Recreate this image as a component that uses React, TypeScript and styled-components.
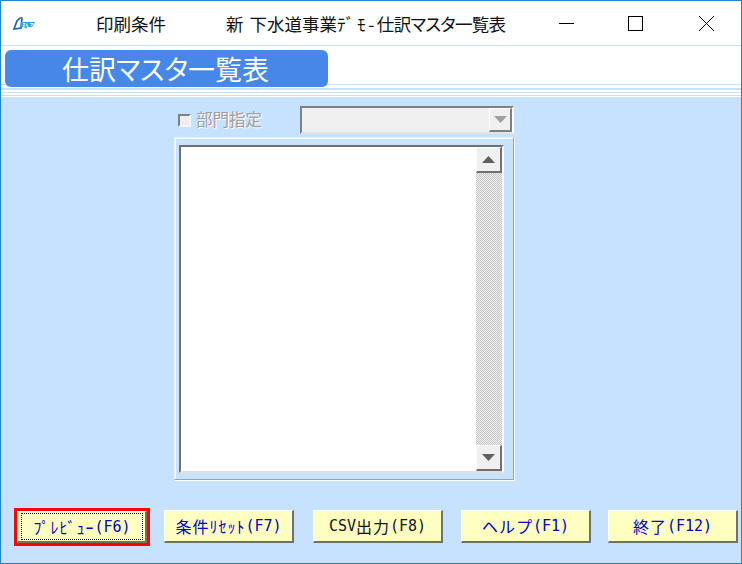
import styled, { createGlobalStyle } from 'styled-components'

const FONT = `"Noto Sans CJK JP", "Noto Sans CJK SC", "Liberation Sans", sans-serif`

const BUTTONS = [
  { prefix: '', label: 'ﾌﾟﾚﾋﾞｭｰ', fnKey: '(F6)', gapAfter: 14, isFocused: true },
  { prefix: '', label: '条件ﾘｾｯﾄ', fnKey: '(F7)', gapAfter: 19 },
  { prefix: 'CSV', label: '出力', fnKey: '(F8)', gapAfter: 18, isDark: true },
  { prefix: '', label: 'ヘルプ', fnKey: '(F1)', gapAfter: 17 },
  { prefix: '', label: '終了', fnKey: '(F12)', gapAfter: 0 },
]

export default function App() {
  return (
    <>
      <GlobalStyle />
      <Window>
        <TitleBar>
          <Logo viewBox="0 0 22 13" aria-hidden="true">
            <path d="M1 12 L4 4 L7 1 H9 L8 11 Z" fill="none" stroke="#1f5fb0" strokeWidth="1.7" />
            <path d="M7 1 H10" stroke="#d98a20" strokeWidth="1.2" />
            <path d="M8 5 H22 L19 10 H14 L13 12 L11 10 H7 Z" fill="#3aa0d8" />
            <path d="M10 6.5 H12 L10 9 H12.5 M14 6.5 L13.5 9 H15.5 M17 6.5 H20 L18 9" fill="none" stroke="#fff" strokeWidth="0.9" />
          </Logo>
          <Caption>印刷条件</Caption>
          <DocTitle>
            新<TitleSpace />下水道事業<HalfText>ﾃﾞﾓ-</HalfText><TitleTail>仕訳マスタ一覧表</TitleTail>
          </DocTitle>
          <WindowControls>
            <ControlIcon viewBox="0 0 15 15" aria-hidden="true">
              <path d="M0 7.5 H15" stroke="#000" />
            </ControlIcon>
            <ControlIcon viewBox="0 0 15 15" aria-hidden="true">
              <rect x="0.5" y="0.5" width="14" height="14" fill="none" stroke="#000" />
            </ControlIcon>
            <CloseIcon viewBox="0 0 15 15" aria-hidden="true">
              <path d="M0 0 L15 15 M15 0 L0 15" stroke="#000" />
            </CloseIcon>
          </WindowControls>
        </TitleBar>

        <Header>
          <HeaderTab>仕訳マスタ一覧表</HeaderTab>
          <Stripes>
            <Stripe $height={1} $gap={3} />
            <Stripe $height={2} $gap={2} />
            <Stripe $height={1} $gap={2} />
            <Stripe $height={1} $gap={1} />
          </Stripes>
        </Header>

        <Body>
          <Form>
            <DeptRow>
              <DeptLabel>
                <Check />
                <DeptText>部門指定</DeptText>
              </DeptLabel>
              <Combo>
                <ComboArrow>
                  <Tri viewBox="0 0 13 7" aria-hidden="true"><path d="M0 0 H13 L6.5 7 Z" fill="#a0a0a0" /></Tri>
                </ComboArrow>
              </Combo>
            </DeptRow>
            <ListFrame>
              <ListBox>
                <ScrollBar>
                  <ScrollButton>
                    <Tri viewBox="0 0 13 7" aria-hidden="true"><path d="M6.5 0 L13 7 H0 Z" fill="#606060" /></Tri>
                  </ScrollButton>
                  <ScrollTrack />
                  <ScrollButton>
                    <Tri viewBox="0 0 13 7" aria-hidden="true"><path d="M0 0 H13 L6.5 7 Z" fill="#606060" /></Tri>
                  </ScrollButton>
                </ScrollBar>
              </ListBox>
            </ListFrame>
          </Form>

          <ButtonRow>
            {BUTTONS.map(button => (
              <ButtonSlot $gapAfter={button.gapAfter} $isFocused={button.isFocused} key={button.fnKey}>
                <FnButton $isDark={button.isDark} type="button">
                  <FnLabel $isFocused={button.isFocused}>
                    {button.prefix}
                    <WideText>{button.label}</WideText>
                    {button.fnKey}
                  </FnLabel>
                </FnButton>
              </ButtonSlot>
            ))}
          </ButtonRow>
        </Body>
      </Window>
    </>
  )
}

const GlobalStyle = createGlobalStyle`
  html, body {
    margin: 0;
    padding: 0;
    background: #fff;
  }
`

const Window = styled.div`
  background: #fff;
  border: 1px solid #1c86d6;
  box-sizing: border-box;
  display: flex;
  flex-direction: column;
  font-family: ${FONT};
  height: 564px;
  width: 742px;
`

const TitleBar = styled.div`
  align-items: center;
  border-bottom: 1px solid #c6e2ff;
  box-sizing: border-box;
  color: #111;
  display: flex;
  flex-shrink: 0;
  font-size: 17.5px;
  height: 45px;
  padding-left: 12px;
`

const Logo = styled.svg`
  height: 13px;
  margin-right: 61px;
  width: 22px;
`

const Caption = styled.span`
  width: 130px;
`

const DocTitle = styled.span`
  font-feature-settings: "palt";
  flex-grow: 1;
`

const TitleSpace = styled.span`
  display: inline-block;
  width: 6px;
`

const HalfText = styled.span`
  letter-spacing: 2.5px;
`

const TitleTail = styled.span`
  letter-spacing: -0.7px;
`

const WindowControls = styled.div`
  display: flex;
  gap: 54px;
  margin-right: 27px;
`

const ControlIcon = styled.svg`
  display: block;
  height: 15px;
  shape-rendering: crispEdges;
  width: 15px;
`

const CloseIcon = styled(ControlIcon)`
  margin-left: 2px;
  shape-rendering: auto;
`

const Header = styled.div`
  display: flex;
  flex-direction: column;
  flex-shrink: 0;
  height: 51px;
  position: relative;
`

const Stripes = styled.div`
  bottom: 0;
  display: flex;
  flex-direction: column;
  left: 0;
  position: absolute;
  right: 0;
`

const Stripe = styled.div<{ $height: number; $gap: number }>`
  background: #c6e2ff;
  height: ${p => p.$height}px;
  margin-bottom: ${p => p.$gap}px;
`

const HeaderTab = styled.div`
  background: #4688e8;
  border-radius: 6px;
  box-sizing: border-box;
  color: #fff;
  font-feature-settings: "palt";
  font-size: 27px;
  height: 37px;
  line-height: 37px;
  margin: 4px 0 0 4px;
  padding-left: 57px;
  position: relative;
  width: 323px;
  z-index: 1;
`

const Body = styled.div`
  background: #c6e2ff;
  display: flex;
  flex-direction: column;
  flex-grow: 1;
  justify-content: space-between;
  padding: 9px 3px 20px 13px;
`

const Form = styled.div`
  display: flex;
  flex-direction: column;
  margin-left: 160px;
  width: 340px;
`

const DeptRow = styled.div`
  align-items: center;
  display: flex;
  height: 28px;
  margin-bottom: 3px;
`

const DeptLabel = styled.label`
  align-items: center;
  color: #a0a0a0;
  display: flex;
  font-size: 16.5px;
  gap: 5px;
  margin-left: 4px;
  text-shadow: 1px 1px 0 #fff;
  width: 122px;
`

const DeptText = styled.span`
  padding-bottom: 2px;
`

const Check = styled.span`
  background: #eee;
  border: 2px solid;
  border-color: #808080 #f4f4f4 #f4f4f4 #808080;
  box-sizing: border-box;
  height: 13px;
  width: 13px;
`

const Combo = styled.div`
  background: #f0f0f0;
  border: 2px solid;
  border-color: #808080 #fff #e4e4e4 #808080;
  box-sizing: border-box;
  display: flex;
  height: 28px;
  justify-content: flex-end;
  width: 214px;
`

const ComboArrow = styled.div`
  align-items: center;
  background: #f0f0f0;
  border: solid;
  border-color: #fff #808080 #808080 #fff;
  border-width: 1px 2px 2px 1px;
  box-sizing: border-box;
  display: flex;
  justify-content: center;
  width: 23px;
`

const Tri = styled.svg`
  display: block;
  height: 7px;
  width: 13px;
`

const ListFrame = styled.div`
  background: #c6e2ff;
  border: 1px solid;
  border-color: #e8f0f8 #a0a0a0 #a0a0a0 #e8f0f8;
  box-shadow: inset 1px 1px 0 #fff, 1px 1px 0 #fff;
  box-sizing: border-box;
  height: 343px;
  padding: 7px 9px 6px 4px;
  width: 340px;
`

const ListBox = styled.div`
  background: #fff;
  border: 2px solid;
  border-color: #707070 #fff #e0e0e0 #707070;
  box-sizing: border-box;
  display: flex;
  height: 100%;
  justify-content: flex-end;
`

const ScrollBar = styled.div`
  display: flex;
  flex-direction: column;
  width: 26px;
`

const ScrollButton = styled.div`
  align-items: center;
  background: #f0f0f0;
  border: solid;
  border-color: #fff #707070 #707070 #fff;
  border-width: 1px 2px 2px 1px;
  box-sizing: border-box;
  display: flex;
  flex-shrink: 0;
  height: 26px;
  justify-content: center;
`

const ScrollTrack = styled.div`
  background: repeating-conic-gradient(#c4c4c4 0 25%, #f0f0f0 0 50%) 0 0 / 2px 2px;
  flex-grow: 1;
`

const ButtonRow = styled.div`
  display: flex;
  height: 33px;
`

const ButtonSlot = styled.div<{ $gapAfter: number; $isFocused?: boolean }>`
  border: ${p => (p.$isFocused ? '3px solid #f00' : '0')};
  box-sizing: border-box;
  display: flex;
  margin: ${p => (p.$isFocused ? '-2px' : '0')} ${p => p.$gapAfter}px ${p => (p.$isFocused ? '-3px' : '0')} 0;
  width: ${p => (p.$isFocused ? '136px' : '130px')};
`

const FnButton = styled.button<{ $isDark?: boolean }>`
  align-items: stretch;
  appearance: none;
  background: #ffffc0;
  border: solid;
  border-color: #fff #707070 #707070 #fff;
  border-width: 1px 2px 2px 1px;
  box-sizing: border-box;
  color: ${p => (p.$isDark ? '#111' : '#0000c8')};
  display: flex;
  font-family: "DejaVu Sans Mono", ${FONT};
  font-size: 15px;
  padding: 0;
  width: 100%;
`

const FnLabel = styled.span<{ $isFocused?: boolean }>`
  align-items: center;
  display: flex;
  flex-grow: 1;
  justify-content: center;
  margin: ${p => (p.$isFocused ? '2px 3px 2px 4px' : '0')};
  outline: ${p => (p.$isFocused ? '1px dotted #111' : 'none')};
  white-space: pre;
`

const WideText = styled.span`
  font-size: 16px;
  letter-spacing: 1px;
`
